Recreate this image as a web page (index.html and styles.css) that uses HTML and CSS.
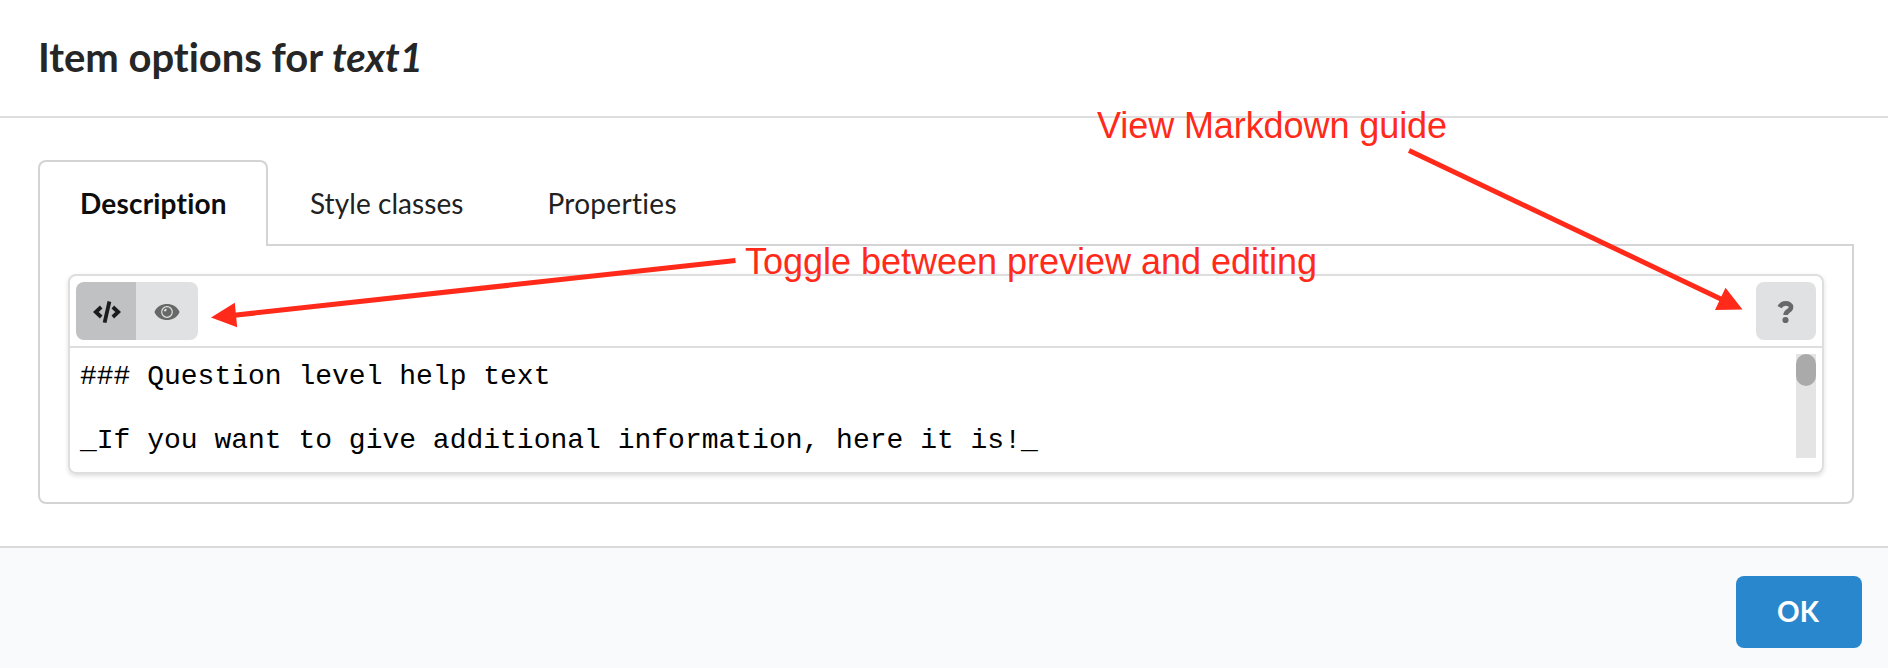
FILE: index.html
```html
<!DOCTYPE html>
<html lang="en">
<head>
<meta charset="utf-8">
<title>Item options</title>
<link rel="stylesheet" href="styles.css">
</head>
<body>
<div class="modal">
  <header class="header"><h1 class="title">Item options for <em>text1</em></h1></header>
  <main class="content">
    <nav class="tabs">
      <a class="tab active">Description</a>
      <a class="tab">Style classes</a>
      <a class="tab wide">Properties</a>
    </nav>
    <section class="panel">
      <div class="editor">
        <div class="toolbar">
          <div class="group">
            <button class="btn selected" aria-label="Edit">
              <svg width="28" height="24" viewBox="0 0 28 24" fill="none" stroke="#1b1c1d" stroke-width="3.800"><path d="M8.200 7 2.800 12 8.200 17M19.800 7 25.200 12 19.800 17M16.400 1.500 11.600 22.700"/></svg>
            </button>
            <button class="btn preview" aria-label="Preview">
              <svg width="26" height="18" viewBox="0 0 26 18"><path fill="#676868" d="M.8 8.100C3.200 3.600 7.800 1 13 1s9.800 2.600 12.200 7.100q.5.900 0 1.800C22.800 14.400 18.200 17 13 17S3.200 14.400.8 9.900q-.5-.900 0-1.800z"/><circle cx="13" cy="9" r="5.300" fill="#676868" stroke="#e0e1e2" stroke-width="1.200"/><path d="M10.600 8.300a2.600 2.600 0 0 1 1.900-1.900" fill="none" stroke="#e0e1e2" stroke-width="2"/></svg>
            </button>
          </div>
          <button class="btn help" aria-label="Markdown guide">
            <svg width="18" height="24" viewBox="0 0 18 24"><path d="M2.600 7.200C4 4.700 5.900 3.400 8.600 3.400c3.100 0 5.400 1.500 5.400 3.800 0 3.700-5.400 3.600-5.400 7.700" fill="none" stroke="#676868" stroke-width="4.600"/><circle cx="8.500" cy="20" r="3.100" fill="#676868"/></svg>
          </button>
        </div>
        <div class="source">
          <pre class="code">### Question level help text

_If you want to give additional information, here it is!_</pre>
          <div class="scrollbar"><div class="thumb"></div></div>
        </div>
      </div>
    </section>
  </main>
  <footer class="footer"><button class="ok">OK</button></footer>
  <svg class="notes" width="1888" height="668" viewBox="0 0 1888 668">
    <text x="1097" y="137.500" textLength="350">View Markdown guide</text>
    <text x="745" y="273.500" textLength="572">Toggle between preview and editing</text>
    <path class="shaft" d="M735.500 260.500 232 315.500M1409 150.500 1724 300.500"/>
    <path d="M211 317.500 234.800 302.700 237.200 327.300zM1742.500 309.500 1725.500 287.700 1715 310z"/>
  </svg>
</div>
</body>
</html>
```
FILE: styles.css
```css
* { box-sizing: border-box; }
body { margin: 0; background: #fff; font-family: Lato, sans-serif; font-variant-ligatures: none; }
.modal { position: relative; width: 1888px; height: 668px; display: flex; flex-direction: column; overflow: hidden; }
.header { height: 118px; padding: 0 38px 2px; border-bottom: 2px solid #dededf; display: flex; align-items: center; }
.title { margin: 0; font-size: 40px; line-height: 52px; font-weight: 700; color: #262626; letter-spacing: -.03px; }
.content { flex: 1; padding: 42px 34px 42px 38px; display: flex; flex-direction: column; }
.tabs { display: flex; height: 86px; margin-bottom: -2px; }
.tab { display: flex; align-items: center; padding: 0 40px 2px; font-size: 28px; color: #212121; border: 2px solid transparent; border-bottom: 0; letter-spacing: .06px; }
.active { position: relative; width: 230px; padding: 0 40px 2px; font-weight: 700; color: #0d0d0d; background: #fff; border-color: #d4d4d5; border-radius: 8px 8px 0 0; letter-spacing: .2px; }
.wide { letter-spacing: .3px; }
.panel { flex: 1; border: 2px solid #d4d4d5; border-radius: 0 0 8px 8px; padding: 28px; }
.editor { height: 200px; border: 2px solid #dededf; border-radius: 8px; box-shadow: 0 2px 4px rgba(34, 36, 38, .15); }
.toolbar { height: 72px; padding: 6px; display: flex; justify-content: space-between; border-bottom: 2px solid #dededf; }
.group { display: flex; border-radius: 8px; overflow: hidden; }
.btn { width: 60px; height: 58px; padding: 2px 0 0; border: 0; background: #e0e1e2; display: flex; align-items: center; justify-content: center; }
.selected { background: #c0c1c2; padding-left: 2px; }
.preview { width: 62px; }
.help { border-radius: 8px; }
.source { display: flex; justify-content: space-between; padding: 6px; }
.code { margin: 7px 0 0 4px; font: 28px/32px "Liberation Mono", monospace; color: #000; }
.scrollbar { width: 20px; height: 104px; background: #e4e4e4; }
.thumb { height: 32px; border-radius: 10px; background: #aaa; }
.footer { height: 122px; padding: 28px 26px; border-top: 2px solid #d9dadb; background: #f9fafb; display: flex; justify-content: flex-end; }
.ok { width: 126px; height: 72px; padding: 0 2px 2px 0; border: 0; border-radius: 8px; background: #2987cd; color: #fff; font: 700 28px Lato, sans-serif; }
.notes { position: absolute; inset: 0; pointer-events: none; fill: #ff2a1a; font: 36px "Liberation Sans", sans-serif; }
.shaft { stroke: #ff2a1a; stroke-width: 5; fill: none; }
```
